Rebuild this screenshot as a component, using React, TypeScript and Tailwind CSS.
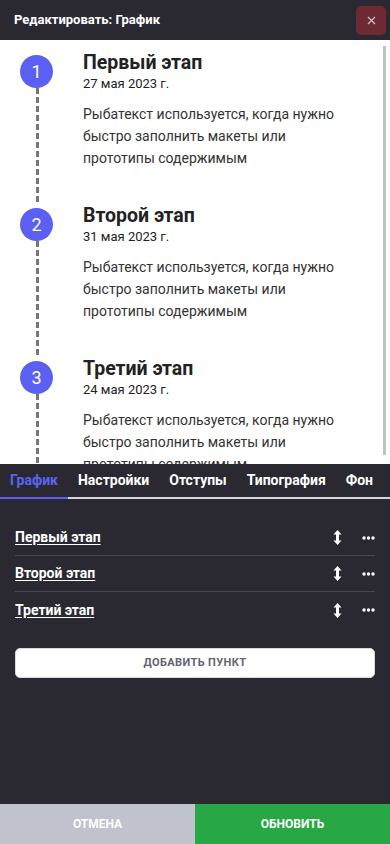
import { useState } from 'react';

const steps = [
  { title: 'Первый этап', date: '27 мая 2023 г.' },
  { title: 'Второй этап', date: '31 мая 2023 г.' },
  { title: 'Третий этап', date: '24 мая 2023 г.' },
];

const body = 'Рыбатекст используется, когда нужно быстро заполнить макеты или прототипы содержимым';

const tabs = ['График', 'Настройки', 'Отступы', 'Типография', 'Фон'];

function ArrowsV() {
  return (
    <svg width="9" height="15" viewBox="0 0 9 15" fill="white">
      <path d="M4.5 0 L8.5 4.5 H6 V10.5 H8.5 L4.5 15 L0.5 10.5 H3 V4.5 H0.5 Z" />
    </svg>
  );
}

function Dots() {
  return (
    <svg width="13" height="4" viewBox="0 0 13 4" fill="white">
      <circle cx="2" cy="2" r="1.7" />
      <circle cx="6.5" cy="2" r="1.7" />
      <circle cx="11" cy="2" r="1.7" />
    </svg>
  );
}

export default function App() {
  const [active, setActive] = useState(0);

  return (
    <div className="h-[844px] w-[390px] flex flex-col bg-[#2a2932] font-['Roboto',sans-serif] overflow-hidden">
      {/* header */}
      <header className="h-[40px] shrink-0 flex items-center justify-between pl-[14px] pr-[4px]">
        <span className="text-white text-[13px] font-bold">Редактировать: График</span>
        <button className="w-[30px] h-[29px] rounded-[5px] bg-[#6e2a33] flex items-center justify-center">
          <svg width="9" height="9" viewBox="0 0 9 9" stroke="#c9c3c8" strokeWidth="1.2">
            <path d="M1 1 L8 8 M8 1 L1 8" />
          </svg>
        </button>
      </header>

      {/* preview */}
      <div className="relative h-[424px] shrink-0 bg-white overflow-hidden">
        <div className="pt-[11px] pl-[20px] pr-[20px]">
          {steps.map((s, i) => (
            <div key={i} className="flex">
              <div className="w-[33px] shrink-0 flex flex-col items-center pt-[4px]">
                <div className="w-[33px] h-[33px] rounded-full bg-[#5b5ff2] text-white text-[18px] flex items-center justify-center">
                  {i + 1}
                </div>
                <div className="w-[3px] flex-1 ml-[2px] bg-[repeating-linear-gradient(to_bottom,#777_0_6px,transparent_6px_9px)]" />
              </div>
              <div className="pl-[30px] pb-[35px]">
                <div className="text-[19.5px] leading-[24px] font-bold text-[#222]">{s.title}</div>
                <div className="text-[13px] leading-[18px] text-[#222]">{s.date}</div>
                <p className="mt-[10px] text-[14px] leading-[22px] text-[#333] w-[260px]">{body}</p>
              </div>
            </div>
          ))}
        </div>
        <div className="absolute right-[4px] top-[6px] w-[3px] h-[409px] bg-[#c1c1c1]" />
      </div>

      {/* tabs */}
      <div className="h-[35px] shrink-0 flex border-b-2 border-[#d6d6dc] whitespace-nowrap">
        {tabs.map((t, i) => (
          <button
            key={t}
            onClick={() => setActive(i)}
            className={
              i === active
                ? 'px-[10px] text-[14px] font-bold text-[#5b63f2] border-b-2 border-[#5b5ff2] -mb-[2px]'
                : 'px-[10px] text-[14px] font-bold text-white'
            }
          >
            {t}
          </button>
        ))}
      </div>

      {/* panel */}
      <div className="flex-1 px-[15px] pt-[21px]">
        {steps.map((s, i) => (
          <div
            key={i}
            className={
              i < steps.length - 1
                ? 'h-[36px] flex items-center border-b border-[#4a4953]'
                : 'h-[36px] flex items-center'
            }
          >
            <span className="flex-1 text-white text-[14px] font-bold underline underline-offset-2">{s.title}</span>
            <span className="w-[10px] flex justify-center mr-[20px]"><ArrowsV /></span>
            <Dots />
          </div>
        ))}
        <button className="mt-[20px] w-full h-[30px] rounded-[5px] bg-white border border-[#d8d9de] text-[11px] font-bold tracking-[0.4px] text-[#5f6372]">
          ДОБАВИТЬ ПУНКТ
        </button>
      </div>

      {/* footer */}
      <div className="h-[40px] shrink-0 flex">
        <button className="flex-1 bg-[#c0c2cc] text-white text-[12px] font-bold">ОТМЕНА</button>
        <button className="flex-1 bg-[#28a745] text-white text-[12px] font-bold">ОБНОВИТЬ</button>
      </div>
    </div>
  );
}
